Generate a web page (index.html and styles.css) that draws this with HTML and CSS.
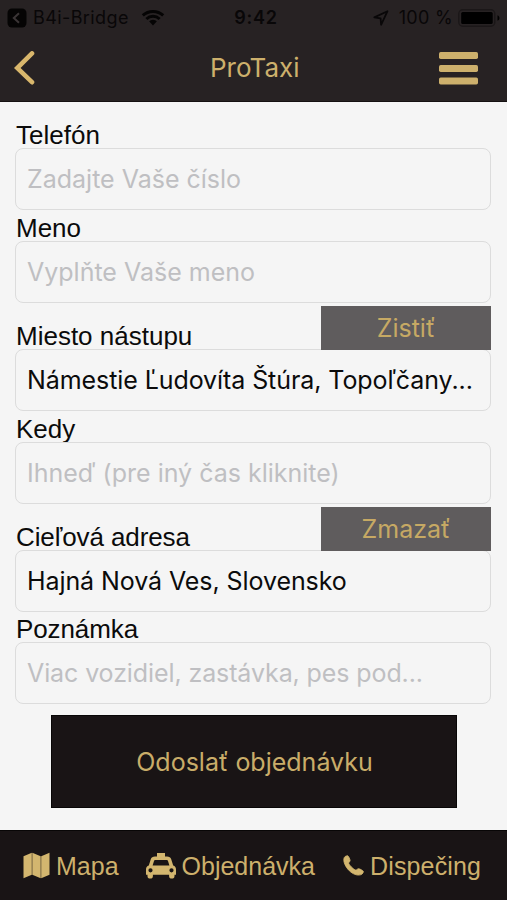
FILE: index.html
```html
<!DOCTYPE html>
<html lang="sk">
<head>
<meta charset="utf-8">
<title>ProTaxi</title>
<link rel="stylesheet" href="styles.css">
</head>
<body>
<div class="app">
  <header class="top">
    <div class="status">
      <div class="status-left">
        <svg class="back-app" width="20" height="20" viewBox="0 0 20 20"><rect x=".5" y=".5" width="19" height="19" rx="4.5"/><path d="M12 5.2 6.8 10l5.2 4.8"/></svg>
        <span class="bridge">B4i-Bridge</span>
        <svg class="wifi" width="24" height="17" viewBox="0 0 24 17"><path d="M1.8 6.4a15 15 0 0 1 20.4 0M5.4 10a9.6 9.6 0 0 1 13.2 0"/><path class="solid" d="M8.1 12.3a5.6 5.6 0 0 1 7.8 0L12 16.4z"/></svg>
      </div>
      <span class="clock">9:42</span>
      <div class="status-right">
        <svg class="location" width="16" height="16" viewBox="0 0 16 16"><path d="M14.5 1.2 1.3 7.4l6.3.9.5 6.5z"/></svg>
        <span class="percent">100 %</span>
        <svg class="battery" width="44" height="18" viewBox="0 0 44 18"><rect class="shell" x=".8" y=".8" width="36" height="16.4" rx="4"/><rect x="3.2" y="3" width="31.5" height="12" rx="1.5"/><path d="M39.5 6.2c2.6 1 2.6 4.6 0 5.6z"/></svg>
      </div>
    </div>
    <div class="titlebar">
      <svg class="back" width="22" height="34" viewBox="0 0 22 34"><path d="M18 2.4 3.2 17 18 31.2"/></svg>
      <h1 class="title">ProTaxi</h1>
      <svg class="menu" width="39" height="34" viewBox="0 0 39 34"><rect y="1" width="39" height="7" rx="1.7"/><rect y="14" width="39" height="7" rx="1.7"/><rect y="26.5" width="39" height="7" rx="1.7"/></svg>
    </div>
  </header>
  <main class="form">
    <div class="row row-tall"><span class="label">Telefón</span></div>
    <div class="input empty"><span>Zadajte Vaše číslo</span></div>
    <div class="row"><span class="label">Meno</span></div>
    <div class="input empty"><span>Vyplňte Vaše meno</span></div>
    <div class="row row-tall"><span class="label">Miesto nástupu</span><button class="small">Zistiť</button></div>
    <div class="input"><span class="address">Námestie Ľudovíta Štúra, Topoľčany...</span></div>
    <div class="row"><span class="label">Kedy</span></div>
    <div class="input empty"><span>Ihneď (pre iný čas kliknite)</span></div>
    <div class="row row-tall"><span class="label label-tight">Cieľová adresa</span><button class="small">Zmazať</button></div>
    <div class="input"><span class="address">Hajná Nová Ves, Slovensko</span></div>
    <div class="row row-last"><span class="label label-tight">Poznámka</span></div>
    <div class="input empty"><span class="note">Viac vozidiel, zastávka, pes pod...</span></div>
    <button class="submit">Odoslať objednávku</button>
  </main>
  <nav class="tabs">
    <div class="tab">
      <svg class="icon-map" width="27" height="27" viewBox="0 0 27 27"><path d="M.5 4.2 8.800.8v21.900L.5 26.200zM9.300.8l8.400 3.400v22l-8.400-3.500zM18.200 4.200 26.500.8v21.900l-8.300 3.500z"/></svg>
      <span>Mapa</span>
    </div>
    <div class="tab">
      <svg class="icon-taxi" width="30" height="26" viewBox="0 0 30 26"><path fill-rule="evenodd" d="M11 0h8v3.500h2c2.200 0 3.600.8 4.300 2.900l1.900 6.100c1.800.5 2.800 2 2.800 4v5.200h-1.500v1.200a2.700 2.700 0 0 1-5.400 0v-1.200H6.900v1.200a2.700 2.700 0 0 1-5.400 0v-1.200H0v-5.200c0-2 1-3.500 2.800-4l1.900-6.100C5.400 4.300 6.800 3.500 9 3.500h2zM9.500 7c-.8 0-1.200.2-1.500 1l-1.400 4.500h16.800L22 8c-.3-.8-.7-1-1.500-1zM4.500 15.200a2.100 2.100 0 1 0 0 4.200 2.100 2.100 0 0 0 0-4.200zm21 0a2.100 2.100 0 1 0 0 4.200 2.100 2.100 0 0 0 0-4.200z"/></svg>
      <span>Objednávka</span>
    </div>
    <div class="tab">
      <svg class="icon-phone" width="21" height="21" viewBox="0 0 21 21"><path d="M1.3 2.500C2 1.200 4.200.4 5 .9c.7.500 2 3.500 2.100 4.400.2 1.100-1.500 2-1.400 3 .2 1.600 5 6.200 6.800 6.700 1.100.3 2-1.500 3.200-1.300 1.100.2 4 1.700 4.500 2.400.6.900-.8 3-2 3.500-3.800 1.500-8.700-.7-11.900-3.900C2.900 12.400-.5 6.300 1.300 2.500z"/></svg>
      <span class="call">Dispečing</span>
    </div>
  </nav>
</div>
</body>
</html>
```
FILE: styles.css
```css
* { box-sizing: border-box; }
body { margin: 0; background: #f5f5f5; font-family: Inter, "Liberation Sans", sans-serif; }
span, h1 { white-space: nowrap; }
svg { display: block; flex: none; }
button { border: 0; padding: 0; font: inherit; }

.app { width: 507px; height: 900px; display: flex; flex-direction: column; overflow: hidden; }

.top { height: 102px; background: #272223; border-bottom: 1px solid #151112; flex: none; }
.status { height: 34px; display: grid; grid-template-columns: 1fr auto 1fr; align-items: center; padding: 1px 5px 0 7px; color: #090708; font-size: 18px; }
.status-left, .status-right { display: flex; align-items: center; }
.status-right { justify-content: flex-end; }
.back-app { fill: #050404; margin-right: 6px; }
.back-app path { fill: none; stroke: #3b3536; stroke-width: 2; }
.bridge { letter-spacing: .4px; }
.wifi { margin-left: 12px; fill: none; stroke: #050404; stroke-width: 3; }
.wifi .solid { fill: #050404; stroke: none; }
.clock { font-weight: 600; letter-spacing: .7px; margin-left: 3px; }
.location { fill: none; stroke: #090708; stroke-width: 1.8; stroke-linejoin: round; margin-right: 10px; }
.percent { margin-right: 5px; letter-spacing: .3px; }
.battery { fill: #000; }
.battery .shell { fill: none; stroke: #1b1718; stroke-width: 1.4; }

.titlebar { height: 67px; display: grid; grid-template-columns: 195px 1fr auto; align-items: center; padding: 0 29px 0 14px; }
.back { fill: none; stroke: #d9b76c; stroke-width: 4.6; stroke-linecap: round; }
.title { margin: 0 0 0 1px; font-size: 26px; line-height: 32px; font-weight: 400; color: #cdb06c; }
.menu { fill: #cdb06c; }

.form { flex: 1; padding: 0 16px 0 15px; display: flex; flex-direction: column; }
.row { height: 31px; flex: none; display: flex; justify-content: space-between; align-items: flex-end; }
.row-tall { height: 46px; }
.row-last { height: 30px; }
.label { font-family: "Liberation Sans", Arial, sans-serif; font-size: 26px; line-height: 30px; color: #0b0b0b; margin: 0 0 -2px 1px; }
.label-tight { letter-spacing: -.1px; }
.input { height: 62px; flex: none; border: 1.5px solid #dcdcdc; border-radius: 8px; padding-left: 11px; display: flex; align-items: center; font-size: 25px; line-height: 32px; color: #0b0b0b; }
.empty { color: #bfbfc2; }
.address { letter-spacing: -.08px; }
.note { letter-spacing: -.1px; }
.small { width: 170px; height: 44px; margin: 0 0 -1px 0; background: #5f5c5d; color: #c6a964; font-size: 25px; line-height: 44px; position: relative; }
.submit { width: 406px; height: 93px; margin: 11px 0 0 36px; padding-left: 1px; background: #191415; border: 1px solid #080606; color: #c9ad69; font-size: 25px; }

.tabs { height: 70px; flex: none; background: #191415; border-top: 1px solid #080606; display: flex; padding-left: 23px; align-items: center; color: #cdb06c; font-family: "Liberation Sans", Arial, sans-serif; font-size: 25px; fill: #d3b66f; }
.tab { display: flex; align-items: center; line-height: 30px; }
.icon-map { margin-right: 6px; }
.icon-taxi { margin: 0 6px 0 27px; }
.icon-phone { margin: 0 6px 0 28px; stroke: #d3b66f; stroke-width: .8; }
.call { letter-spacing: .15px; }
```
